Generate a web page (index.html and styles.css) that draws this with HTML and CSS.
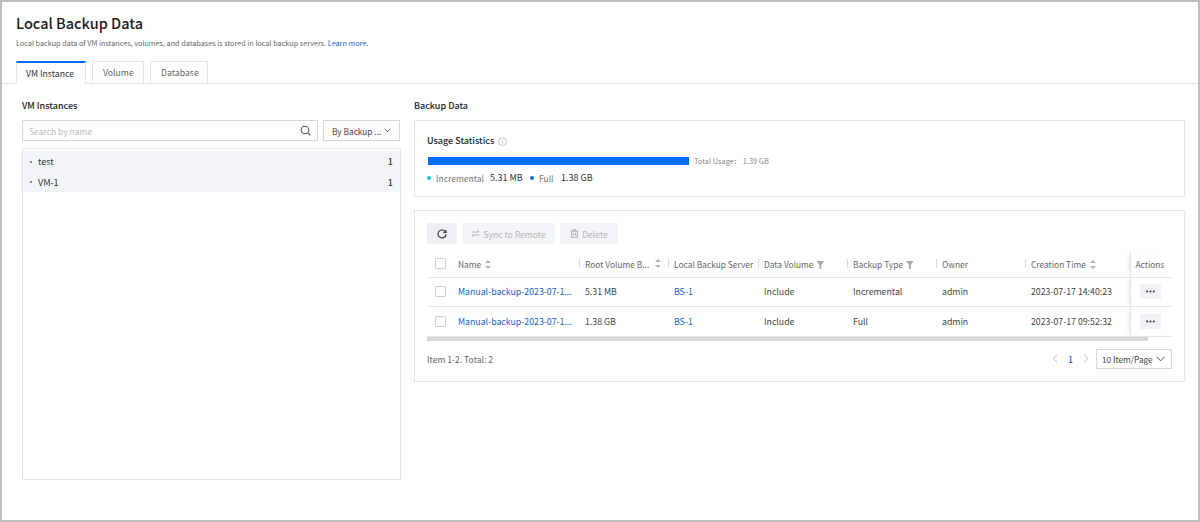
FILE: index.html
```html
<!DOCTYPE html>
<html lang="en">
<head>
    <meta charset="UTF-8">
    <title>Local Backup Data</title>
    <link rel="stylesheet" href="styles.css">
</head>
<body>
    <div class="page">
        <header class="page-head">
            <h1>Local Backup Data</h1>
            <p>Local backup data of VM instances, volumes, and databases is stored in local backup servers. <a href="#">Learn more.</a></p>
            <div class="tabs">
                <div class="tab active">VM Instance</div>
                <div class="tab">Volume</div>
                <div class="tab">Database</div>
            </div>
        </header>

        <div class="content">
            <section class="left">
                <h2>VM Instances</h2>
                <div class="filters">
                    <div class="search">
                        <span>Search by name</span>
                        <svg width="11" height="11" viewBox="0 0 11 11" fill="none" stroke="#555" stroke-width="1.1"><circle cx="5" cy="5" r="3.8"/><path d="M8 8l2.4 2.4"/></svg>
                    </div>
                    <div class="select">
                        <span>By Backup ...</span>
                        <svg width="7" height="5" viewBox="0 0 7 5" fill="none" stroke="#555"><path d="M.7 1l2.8 2.6L6.3 1"/></svg>
                    </div>
                </div>
                <div class="vm-list">
                    <div class="vm-row"><span class="vm-dot"></span><span class="vm-name">test</span><b>1</b></div>
                    <div class="vm-row"><span class="vm-dot"></span><span class="vm-name">VM-1</span><b>1</b></div>
                </div>
            </section>

            <section class="right">
                <h2>Backup Data</h2>
                <div class="card usage">
                    <div class="usage-title">Usage Statistics
                        <svg width="9" height="9" viewBox="0 0 9 9" fill="none" stroke="#aaa" stroke-width=".7"><circle cx="4.5" cy="4.5" r="4"/><path d="M4.5 4v2.6M4.5 2.2v.9"/></svg>
                    </div>
                    <div class="usage-bar-row">
                        <div class="usage-bar"></div>
                        <span class="usage-total">Total Usage： 1.39 GB</span>
                    </div>
                    <div class="legend">
                        <span class="dot cyan"></span><span class="legend-label inc">Incremental</span><span class="legend-value inc-value">5.31 MB</span>
                        <span class="dot blue"></span><span class="legend-label full">Full</span><span class="legend-value">1.38 GB</span>
                    </div>
                </div>

                <div class="card backups">
                    <div class="toolbar">
                        <button class="btn refresh">
                            <svg width="10" height="10" viewBox="0 0 10 10" fill="none" stroke="#333" stroke-width="1.1"><path d="M8.6 3.2A4 4 0 1 0 9 5.4"/><path d="M8.9 .9v2.5H6.4"/></svg>
                        </button>
                        <button class="btn disabled sync">
                            <svg width="9" height="9" viewBox="0 0 9 9" fill="none" stroke="#aaa" stroke-width=".9"><path d="M.5 3h7.6L6.2 1.1M8.5 6H.9l1.9 1.9"/></svg>
                            Sync to Remote
                        </button>
                        <button class="btn disabled remove">
                            <svg width="9" height="9" viewBox="0 0 9 9" fill="none" stroke="#aaa" stroke-width=".9"><path d="M.6 2.2h7.8M3 2.2V.8h3v1.4M1.6 2.2v6.2h5.8V2.2M3.4 4v2.8M5.6 4v2.8"/></svg>
                            Delete
                        </button>
                    </div>

                    <div class="table-wrap">
                        <table>
                            <colgroup>
                                <col class="c-check"><col class="c-name"><col class="c-root"><col class="c-server"><col class="c-volume"><col class="c-type"><col class="c-owner"><col class="c-time"><col class="c-actions">
                            </colgroup>
                            <thead>
                                <tr>
                                    <th class="check"><span class="checkbox"></span></th>
                                    <th class="first">Name <span class="sort"></span></th>
                                    <th><div class="split">Root Volume B... <span class="sort"></span></div></th>
                                    <th>Local Backup Server</th>
                                    <th>Data Volume <span class="filter"></span></th>
                                    <th>Backup Type <span class="filter"></span></th>
                                    <th>Owner</th>
                                    <th>Creation Time <span class="sort"></span></th>
                                    <th class="actions">Actions</th>
                                </tr>
                            </thead>
                            <tbody>
                                <tr>
                                    <td class="check"><span class="checkbox"></span></td>
                                    <td><a href="#">Manual-backup-2023-07-1...</a></td>
                                    <td>5.31 MB</td>
                                    <td><a href="#">BS-1</a></td>
                                    <td>Include</td>
                                    <td>Incremental</td>
                                    <td>admin</td>
                                    <td>2023-07-17 14:40:23</td>
                                    <td class="actions"><span class="more"><svg width="9" height="3" viewBox="0 0 9 3" fill="#333"><circle cx="1.2" cy="1.5" r="1"/><circle cx="4.5" cy="1.5" r="1"/><circle cx="7.8" cy="1.5" r="1"/></svg></span></td>
                                </tr>
                                <tr>
                                    <td class="check"><span class="checkbox"></span></td>
                                    <td><a href="#">Manual-backup-2023-07-1...</a></td>
                                    <td>1.38 GB</td>
                                    <td><a href="#">BS-1</a></td>
                                    <td>Include</td>
                                    <td>Full</td>
                                    <td>admin</td>
                                    <td>2023-07-17 09:52:32</td>
                                    <td class="actions"><span class="more"><svg width="9" height="3" viewBox="0 0 9 3" fill="#333"><circle cx="1.2" cy="1.5" r="1"/><circle cx="4.5" cy="1.5" r="1"/><circle cx="7.8" cy="1.5" r="1"/></svg></span></td>
                                </tr>
                            </tbody>
                        </table>
                        <div class="scrollbar"></div>
                    </div>

                    <div class="pager">
                        <span>Item 1-2. Total: 2</span>
                        <div class="pager-right">
                            <svg width="6" height="9" viewBox="0 0 6 9" fill="none" stroke="#bbb"><path d="M5 .8L1.2 4.5 5 8.2"/></svg>
                            <span class="page-num">1</span>
                            <svg width="6" height="9" viewBox="0 0 6 9" fill="none" stroke="#bbb"><path d="M1 .8l3.8 3.7L1 8.2"/></svg>
                            <div class="page-size">
                                <span>10 Item/Page</span>
                                <svg width="9" height="6" viewBox="0 0 9 6" fill="none" stroke="#555"><path d="M.6 .8L4.5 4.8 8.4 .8"/></svg>
                            </div>
                        </div>
                    </div>
                </div>
            </section>
        </div>
    </div>
</body>
</html>
```

FILE: styles.css
```css
* {
    box-sizing: border-box;
}
html, body {
    margin: 0;
    padding: 0;
}
body {
    font-family: "Noto Sans CJK SC", "Noto Sans", sans-serif;
    font-size: 9px;
    color: #444;
    background: #fff;
    white-space: nowrap;
}
a {
    color: #0f5fd8;
    text-decoration: none;
}
.page {
    width: 1200px;
    height: 522px;
    border: 2px solid #bdbdbd;
    background: #fff;
    overflow: hidden;
}

/* header and tabs */
.page-head {
    padding: 11px 0 0 14px;
    border-bottom: 1px solid #e3e4e6;
    height: 82px;
}
.page-head h1 {
    margin: 0;
    font-size: 14.5px;
    line-height: 20px;
    font-weight: 500;
    color: #1c1c1c;
}
.page-head p {
    margin: 4px 0 0;
    font-size: 7.25px;
    line-height: 12px;
    color: #666;
}
.tabs {
    display: flex;
    gap: 6px;
    margin-top: 12px;
}
.tab {
    height: 22px;
    padding: 0 10px;
    line-height: 21px;
    font-size: 8.7px;
    color: #666;
    border: 1px solid #e3e4e6;
    border-bottom: none;
    background: #fff;
}
.tab.active {
    position: relative;
    height: 23px;
    width: 70px;
    padding: 0 9px;
    color: #333;
    border-top: 2px solid #006eff;
}
.tab:nth-child(2) {
    width: 52px;
}
.tab:nth-child(3) {
    width: 58px;
}

/* two columns */
.content {
    display: flex;
    padding-top: 15px;
    padding-left: 20px;
}
h2 {
    margin: 0;
    font-size: 9px;
    line-height: 14px;
    font-weight: 500;
    color: #222;
}
.left {
    width: 379px;
    margin-right: 13px;
}
.right {
    width: 771px;
}
.filters {
    display: flex;
    gap: 5px;
    margin-top: 7px;
}
.search, .select {
    height: 21px;
    display: flex;
    align-items: center;
    justify-content: space-between;
    border: 1px solid #d6d7da;
}
.search {
    width: 296px;
    padding: 0 6px;
    font-size: 8.5px;
    color: #bbb;
}
.select {
    width: 77px;
    padding: 0 8px;
    font-size: 8.3px;
    color: #444;
}
.vm-list {
    height: 332px;
    margin-top: 7px;
    padding: 2px 0;
    border: 1px solid #e3e4e6;
}
.vm-row {
    display: flex;
    align-items: center;
    height: 20.5px;
    padding: 1px 7px 0;
    background: #f3f4f7;
    color: #333;
}
.vm-dot {
    width: 2px;
    height: 2px;
    margin-right: 6px;
    background: #666;
    border-radius: 50%;
}
.vm-name {
    flex: 1;
}
.vm-row b {
    font-weight: 500;
}

/* cards */
.card {
    border: 1px solid #e3e4e6;
}
.usage {
    height: 77px;
    margin-top: 7px;
    padding: 13px 12px 0;
}
.usage-title {
    display: flex;
    align-items: center;
    gap: 4px;
    font-weight: 500;
    color: #222;
    line-height: 14px;
}
.usage-bar-row {
    display: flex;
    align-items: center;
    gap: 5px;
    margin-top: 9px;
}
.usage-bar {
    width: 261px;
    height: 8px;
    margin-left: 1px;
    background: #006eff;
}
.usage-total {
    font-size: 7.4px;
    color: #888;
    line-height: 8px;
}
.legend {
    display: flex;
    align-items: center;
    margin-top: 7px;
    line-height: 12px;
}
.dot {
    width: 4px;
    height: 4px;
    border-radius: 50%;
    margin-right: 5px;
}
.dot.cyan {
    background: #00c8dc;
}
.dot.blue {
    background: #006eff;
}
.legend-label {
    font-size: 8.5px;
    color: #777;
}
.legend-label.inc {
    width: 54px;
}
.legend-label.full {
    width: 22px;
}
.legend-value {
    color: #333;
}
.legend-value.inc-value {
    width: 40px;
}
.backups {
    height: 172px;
    margin-top: 13px;
    padding: 12px 12px 0;
}

/* toolbar */
.toolbar {
    display: flex;
    gap: 5px;
}
.btn {
    height: 21px;
    display: flex;
    align-items: center;
    justify-content: center;
    gap: 3px;
    padding: 0;
    border: none;
    font: inherit;
    font-size: 8.6px;
    background: #f3f4f7;
}
.btn.refresh {
    width: 30px;
    background: #eef0f3;
}
.btn.disabled {
    color: #b5b5b5;
}
.btn.sync {
    width: 93px;
}
.btn.remove {
    width: 58px;
}

/* table */
.table-wrap {
    position: relative;
    margin-top: 7px;
}
table {
    width: 745px;
    table-layout: fixed;
    border-collapse: collapse;
}
.c-check { width: 25px; }
.c-name { width: 127px; }
.c-root { width: 89px; }
.c-server { width: 90px; }
.c-volume { width: 89px; }
.c-type { width: 89px; }
.c-owner { width: 89px; }
.c-time { width: 105px; }
.c-actions { width: 42px; }
th {
    height: 26px;
    padding: 0 0 0 6px;
    font-size: 8.4px;
    font-weight: 400;
    text-align: left;
    color: #666;
    border-bottom: 1px solid #e3e4e6;
    background: linear-gradient(#d9d9d9, #d9d9d9) left center / 1px 9px no-repeat;
}
th.check, th.first {
    background: none;
}
td {
    height: 29.5px;
    padding: 0 0 0 6px;
    font-size: 8.75px;
    color: #444;
    border-bottom: 1px solid #e3e4e6;
}
.check {
    padding-left: 8px;
}
.split {
    display: flex;
    align-items: center;
    gap: 3px;
}
.split .sort {
    margin-left: auto;
    margin-right: 6px;
}
.checkbox {
    display: block;
    width: 11px;
    height: 11px;
    border: 1px solid #cfd0d3;
    border-radius: 1px;
    background: #fff;
}
.sort {
    display: inline-block;
    position: relative;
    width: 7px;
    height: 9px;
    margin-left: 2px;
    vertical-align: -1px;
}
.sort::before, .sort::after {
    content: "";
    position: absolute;
    left: 0;
    border-left: 3px solid transparent;
    border-right: 3px solid transparent;
}
.sort::before {
    top: 0;
    border-bottom: 3px solid #b4b4b4;
}
.sort::after {
    bottom: 0;
    border-top: 3px solid #b4b4b4;
}
.filter {
    display: inline-block;
    width: 8px;
    height: 8px;
    margin-left: 1px;
    vertical-align: -1px;
    background: #a8a8a8;
    clip-path: polygon(0 0, 100% 0, 62% 50%, 62% 100%, 38% 100%, 38% 50%);
}
th.actions, td.actions {
    padding-left: 5px;
    background: #fff;
    border-left: 1px solid #e3e4e6;
    box-shadow: -5px 0 6px -4px rgba(0,0,0,0.1);
}
.more {
    display: flex;
    align-items: center;
    justify-content: center;
    width: 21px;
    height: 15px;
    margin-left: 4px;
    background: #f1f2f5;
}
.scrollbar {
    position: absolute;
    left: 0;
    bottom: -4px;
    width: 721px;
    height: 4px;
    background: #d6d7da;
}

/* pager */
.pager {
    display: flex;
    align-items: center;
    justify-content: space-between;
    margin-top: 12px;
    font-size: 8.6px;
    color: #666;
}
.pager-right {
    display: flex;
    align-items: center;
}
.page-num {
    margin: 0 10px;
    color: #0f5fd8;
    font-weight: 500;
}
.page-size {
    display: flex;
    align-items: center;
    justify-content: space-between;
    width: 76px;
    height: 20px;
    margin-left: 7px;
    padding: 0 6px 0 5px;
    font-size: 8.3px;
    color: #444;
    border: 1px solid #d6d7da;
}
```
